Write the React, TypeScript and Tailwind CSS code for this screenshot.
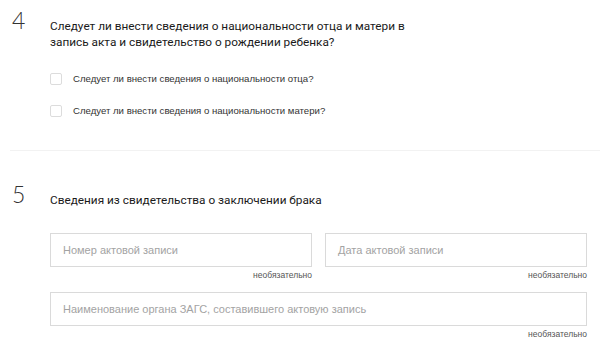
import React from "react";

const optional = "необязательно";

function Numeral({ n }: { n: string }) {
  return (
    <div className="w-[50px] shrink-0 pl-[12px] font-['Lato',sans-serif] text-[23px] leading-[24px] font-light text-[#333]">
      {n}
    </div>
  );
}

function Checkbox({ label }: { label: string }) {
  return (
    <label className="flex h-[16px] items-center">
      <span className="h-[12px] w-[12px] rounded-[2px] border border-[#dcdcdc] bg-white" />
      <span className="ml-[11px] font-['Liberation_Sans',sans-serif] text-[9.6px] text-[#333]">
        {label}
      </span>
    </label>
  );
}

function Field({ placeholder }: { placeholder: string }) {
  return (
    <div className="flex flex-col">
      <div className="flex h-[34px] items-center border border-[#dadada] pl-[12px] font-['Liberation_Sans',sans-serif] text-[11px] text-[#a3a3a3]">
        {placeholder}
      </div>
      <div className="mt-[3px] text-right font-['Liberation_Sans',sans-serif] text-[8.5px] leading-[11px] text-[#555]">
        {optional}
      </div>
    </div>
  );
}

export default function App() {
  return (
    <div className="h-[351px] w-[600px] overflow-hidden bg-white">
      <section className="flex pt-[8px]">
        <Numeral n="4" />
        <div className="mt-[10px] flex flex-col">
          <h3 className="font-['Roboto',sans-serif] text-[11.8px] leading-[16px] text-[#1a1a1a]">
            Следует ли внести сведения о национальности отца и матери в
            <br />
            запись акта и свидетельство о рождении ребенка?
          </h3>
          <div className="mt-[21px] flex flex-col gap-[16px]">
            <Checkbox label="Следует ли внести сведения о национальности отца?" />
            <Checkbox label="Следует ли внести сведения о национальности матери?" />
          </div>
        </div>
      </section>

      <div className="ml-[10px] mt-[31px] h-px bg-[#f2f2f2]" />

      <section className="mt-[31px] flex">
        <Numeral n="5" />
        <div className="mr-[13px] mt-[10px] flex flex-1 flex-col">
          <h3 className="font-['Roboto',sans-serif] text-[11.8px] leading-[16px] text-[#1a1a1a]">
            Сведения из свидетельства о заключении брака
          </h3>
          <div className="mt-[25px] grid grid-cols-2 gap-x-[13px]">
            <Field placeholder="Номер актовой записи" />
            <Field placeholder="Дата актовой записи" />
          </div>
          <div className="mt-[11px]">
            <Field placeholder="Наименование органа ЗАГС, составившего актовую запись" />
          </div>
        </div>
      </section>
    </div>
  );
}
